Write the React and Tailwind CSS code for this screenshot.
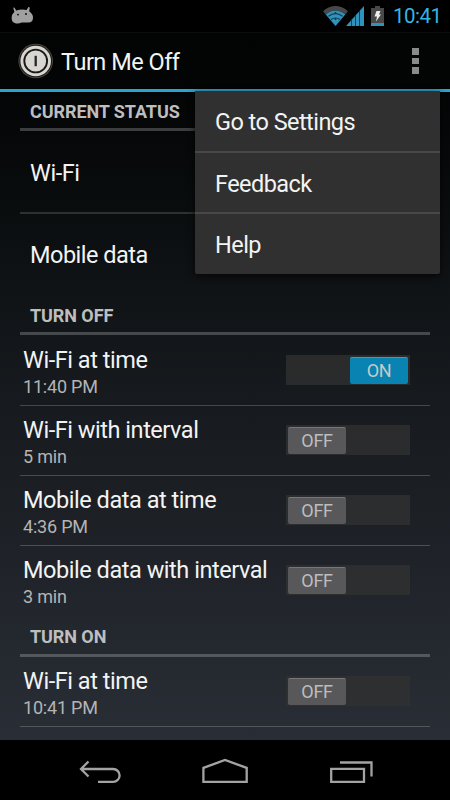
import { useState } from "react";
import clsx from "clsx";

const menuItems = ["Go to Settings", "Feedback", "Help"];

const turnOffItems = [
  { id: 1, title: "Wi-Fi at time", value: "11:40 PM", on: true },
  { id: 2, title: "Wi-Fi with interval", value: "5 min", on: false },
  { id: 3, title: "Mobile data at time", value: "4:36 PM", on: false },
  { id: 4, title: "Mobile data with interval", value: "3 min", on: false },
];

const turnOnItems = [
  { id: 5, title: "Wi-Fi at time", value: "10:41 PM", on: false },
];

const StatusBar = () => (
  <div className="flex h-8 items-center bg-black pl-[11px] pr-[9px]">
    <svg width="24" height="18" viewBox="0 0 24 18" fill="#a0a0a0" className="mt-[-1px]">
      <path d="M2.2 0.8 L3.4 0.4 L5.2 3.4 Q11 1.6 15.6 3 L17.4 0 L18.8 0.6 L18.2 4.2 Q22 7 22 10.5 Q22 15.8 17 15.6 L10.5 15.6 Q8 17 5 16.4 Q0.6 15.6 0.6 11 Q0.6 7.4 3.4 4.8 Z" />
      <circle cx="7" cy="7.6" r="0.9" fill="#000" />
      <circle cx="15" cy="7" r="0.9" fill="#000" />
    </svg>
    <div className="ml-auto flex items-center">
      {/* Wifi */}
      <svg width="26" height="20" viewBox="0 0 26 20">
        <path d="M0 5.2 Q12.5 -5 25 5.2 L22.3 8.5 Q12.5 0.5 2.7 8.5 Z" fill="#484848" />
        <path d="M2.7 8.5 Q12.5 0.5 22.3 8.5 L12.5 20 Z" fill="#2f93bb" />
        <path d="M5.5 10.2 Q12.5 5 19.5 10.2 M8 13.5 Q12.5 10.5 17 13.5" stroke="#0d3a4b" strokeWidth="1.2" fill="none" />
        <path d="M12.5 6 V8 M12.5 12 V14" stroke="#0d3a4b" strokeWidth="1.5" />
      </svg>
      {/* Signal */}
      <svg width="18" height="20" viewBox="0 0 18 20" className="ml-[-3px]">
        <path d="M0 20 L18 0 V20 Z" fill="#2f93bb" />
        <path d="M5.5 13 V20 M9.5 9 V20 M13.5 5 V20" stroke="#0d4358" strokeWidth="1" />
      </svg>
      {/* Battery */}
      <svg width="13" height="20" viewBox="0 0 13 20" className="ml-[7px]">
        <path d="M4 0 H9 V2 H13 V17 H0 V2 H4 Z" fill="#484848" />
        <rect y="17" width="13" height="3" fill="#2f93bb" />
        <path d="M5.5 5 H9.5 L8 8.5 H10 L5 15.5 L6 10.5 H3.5 Z" fill="#eee" />
      </svg>
      <span className="ml-[9px] w-[48px] whitespace-nowrap text-[20.5px] leading-8 tracking-[-0.5px] text-[#33b5e5]">
        10:41
      </span>
    </div>
  </div>
);

const ActionBar = ({ onMenu }) => (
  <div className="flex h-[60px] items-center border-b-[3px] border-t border-b-[#2ba3d0] border-t-[#0c0c0c] pl-[18px]">
    <svg width="36" height="36" viewBox="0 0 36 36">
      <circle cx="17.7" cy="18" r="17.3" fill="#4b4744" />
      <circle cx="17.7" cy="18" r="16.3" fill="#1c1917" />
      <circle cx="17.7" cy="18" r="15.3" fill="#d8d6d0" />
      <circle cx="17.7" cy="18" r="11.4" fill="#d8d6d0" stroke="#1c1917" strokeWidth="1.9" />
      <path d="M17.7 12.8 V23.2" stroke="#292523" strokeWidth="2.3" />
    </svg>
    <h1 className="ml-[7px] pt-[3px] text-[23.5px] tracking-[-0.5px] text-[#f3f3f3]">Turn Me Off</h1>
    <button onClick={onMenu} className="ml-auto mr-[31px] flex flex-col gap-[3px]">
      <span className="h-[6.5px] w-[7px] bg-[#8a8a8a]" />
      <span className="h-[6.5px] w-[7px] bg-[#8a8a8a]" />
      <span className="h-[6.5px] w-[7px] bg-[#8a8a8a]" />
    </button>
  </div>
);

const SectionHeader = ({ children, className = "h-[39px]" }) => (
  <h2
    className={clsx(
      "flex items-center border-b-[3px] border-white/22 pl-[10px] pt-[2px] text-[18px] font-bold tracking-[-0.08px] text-[#bebebe]",
      className,
    )}
  >
    {children}
  </h2>
);

const Toggle = ({ on, onClick }) => (
  <button
    onClick={onClick}
    className={clsx(
      "mr-5 mt-[19px] flex h-[30px] w-[124px] items-center bg-[#323232]/75 px-[2px]",
      on && "justify-end",
    )}
  >
    <span
      className={clsx(
        "h-[27px] w-[58px] rounded-[2px] border-t text-center text-[18px] leading-[26px] tracking-[-0.3px]",
        on
          ? "border-[#3a9dc4] bg-[#0883b2] text-[#c9c9c9]"
          : "border-[#777] bg-[#58585a] text-[#bdbdbd]",
      )}
    >
      {on ? "ON" : "OFF"}
    </span>
  </button>
);

const SettingRow = ({ item, last }) => {
  const [on, setOn] = useState(item.on);

  return (
    <div
      className={clsx(
        "flex h-[70px] items-start justify-between border-b pl-[3px]",
        last ? "border-transparent" : "border-white/20",
      )}
    >
      <div className="pt-[10px]">
        <p className="text-[23.5px] leading-[28px] tracking-[-0.46px] text-[#f3f3f3]">{item.title}</p>
        <p className="text-[18px] leading-[25px] tracking-[-0.2px] text-[#b4b4b4]">{item.value}</p>
      </div>
      <Toggle on={on} onClick={() => setOn(!on)} />
    </div>
  );
};

const OverflowMenu = () => (
  <div className="absolute left-[195px] top-[91px] w-[245px] rounded-b-[2px] bg-[#303030] shadow-[0_2px_7px_rgba(0,0,0,0.8)]">
    {menuItems.map((label) => (
      <button
        key={label}
        className="block h-[61px] w-full border-b-2 border-[#484848] pl-5 pt-1 text-left text-[23.5px] tracking-[-0.55px] text-[#f3f3f3] first:h-[62px] last:h-[60px] last:border-b-0"
      >
        {label}
      </button>
    ))}
  </div>
);

const NavBar = () => (
  <div className="flex h-[60px] items-center justify-center bg-black">
    <svg width="300" height="30" viewBox="0 0 300 30" fill="none" stroke="#a3a3a3" strokeWidth="2.3">
      <path d="M13.5 6.5 L6 14 L13.5 21.500 M6.5 14 H38.2 A6.400 6.400 0 0 1 38.2 26.8 H23" />
      <path d="M128.400 26.8 V12.8 L150 5 L171.700 12.8 V26.8 Z" />
      <path d="M256.200 13.8 H289 V26.8 H256.200 Z M265 7.5 H296.500 V21.500" />
    </svg>
  </div>
);

const App = () => {
  const [menuOpen, setMenuOpen] = useState(true);

  return (
    <div className="relative flex h-[800px] w-[450px] flex-col overflow-hidden bg-black font-[Roboto,sans-serif]">
      <StatusBar />
      <div className="flex h-[708px] flex-col bg-linear-to-b from-[#020303] via-[#121518] via-40% to-[#292e36]">
        <ActionBar onMenu={() => setMenuOpen(!menuOpen)} />
        <div className="px-5">
          <SectionHeader>CURRENT STATUS</SectionHeader>
          <div className="flex h-[83px] items-center border-b-2 border-white/15 pl-[10px] pt-[5px] text-[23.5px] tracking-[-0.46px] text-[#f3f3f3]">
            Wi-Fi
          </div>
          <div className="flex h-[82px] items-center pl-[10px] pt-[2px] text-[23.5px] tracking-[-0.5px] text-[#f3f3f3]">
            Mobile data
          </div>
          <SectionHeader>TURN OFF</SectionHeader>
          <div className="pt-px">
            {turnOffItems.map((item, i) => (
              <SettingRow key={item.id} item={item} last={i === turnOffItems.length - 1} />
            ))}
          </div>
          <SectionHeader className="h-[41px]">TURN ON</SectionHeader>
          {turnOnItems.map((item) => (
            <SettingRow key={item.id} item={item} />
          ))}
        </div>
      </div>
      <NavBar />
      {menuOpen && <OverflowMenu />}
    </div>
  );
};

export default App;
